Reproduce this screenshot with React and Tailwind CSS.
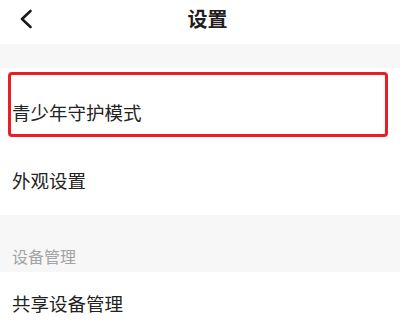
import React from "react";

export default function App() {
  const font = { fontFamily: '"Noto Sans CJK SC", "Noto Sans", sans-serif' };
  return (
    <div className="w-[400px] h-[330px] overflow-hidden bg-white relative" style={font}>
      <div className="h-[44px] flex items-center relative">
        <svg className="absolute left-[18px] top-[9px]" width="16" height="20" viewBox="0 0 16 20">
          <path d="M12.5 2 L4 10 L12.5 18" fill="none" stroke="#1a1a1a" strokeWidth="2.6" strokeLinecap="round" strokeLinejoin="round" />
        </svg>
        <div className="flex-1 flex justify-center pl-[15px] pb-[6px] text-[20px] font-semibold text-[#1f1f1f]">设置</div>
      </div>
      <div className="h-[24px] bg-[#f7f7f7]" />
      <div className="pt-[11px]">
        <div className="h-[68px] flex items-center pl-[12px] text-[18.5px] text-[#222]">青少年守护模式</div>
        <div className="h-[68px] flex items-center pl-[12px] text-[18.5px] text-[#222]">外观设置</div>
      </div>
      <div className="h-[57px] bg-[#f7f7f7] flex items-end pb-[4px] pl-[12px] text-[16px] text-[#a3a3a3]">设备管理</div>
      <div className="h-[64px] flex items-center pl-[12px] text-[18.5px] text-[#222]">共享设备管理</div>
      <div className="absolute left-[8px] top-[72px] w-[380px] h-[65px] border-[3px] border-[#ee1c24] rounded-[4px] pointer-events-none" />
    </div>
  );
}
